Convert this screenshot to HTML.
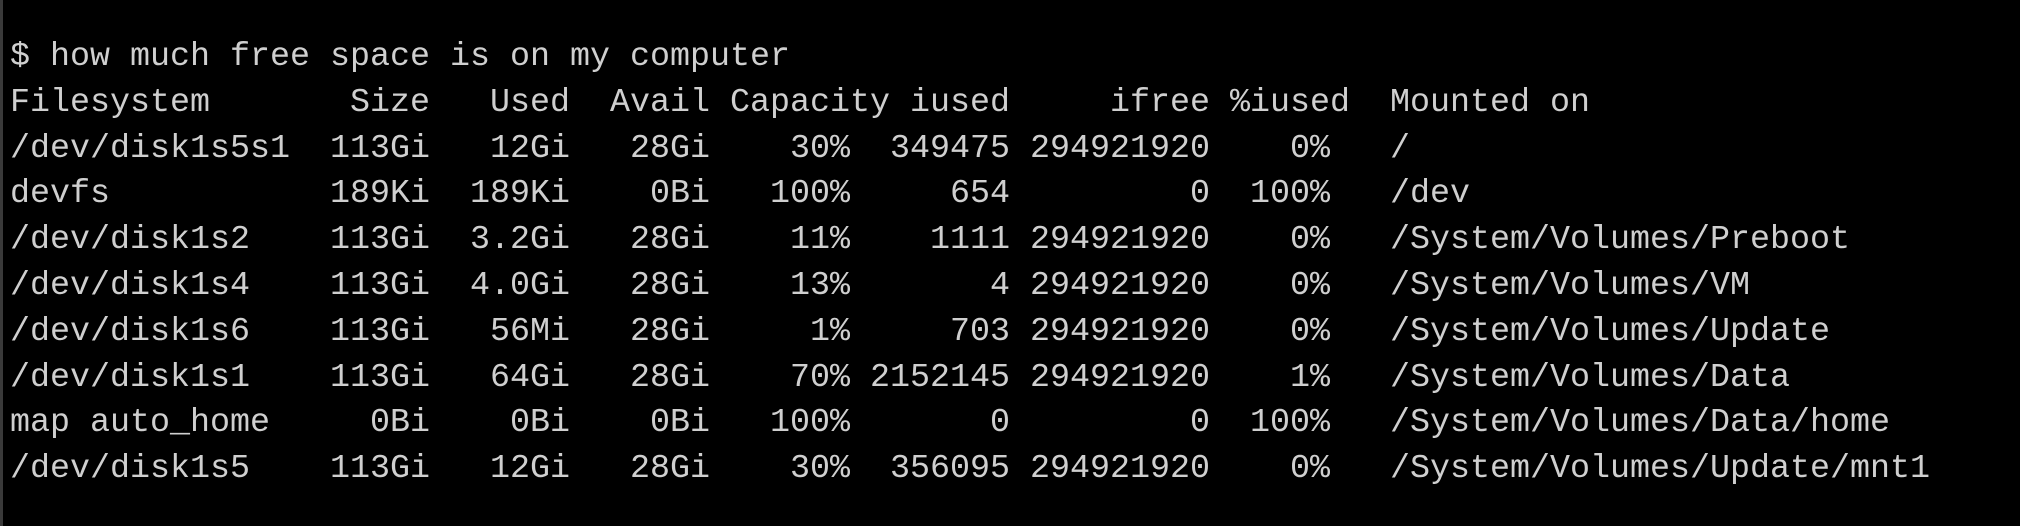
<!DOCTYPE html>
<html><head><meta charset="utf-8"><style>
html,body{margin:0;padding:0;background:#000;width:2020px;height:526px;overflow:hidden}
.b{position:absolute;left:0;top:0;width:3px;height:526px;background:#3a3a3a}
pre{position:absolute;left:10px;top:35px;margin:0;font-family:"Liberation Mono",monospace;font-size:33.33px;line-height:45.8px;color:#cfcfcf;white-space:pre}
</style></head><body><div class="b"></div>
<pre>$ how much free space is on my computer
Filesystem       Size   Used  Avail Capacity iused     ifree %iused  Mounted on
/dev/disk1s5s1  113Gi   12Gi   28Gi    30%  349475 294921920    0%   /
devfs           189Ki  189Ki    0Bi   100%     654         0  100%   /dev
/dev/disk1s2    113Gi  3.2Gi   28Gi    11%    1111 294921920    0%   /System/Volumes/Preboot
/dev/disk1s4    113Gi  4.0Gi   28Gi    13%       4 294921920    0%   /System/Volumes/VM
/dev/disk1s6    113Gi   56Mi   28Gi     1%     703 294921920    0%   /System/Volumes/Update
/dev/disk1s1    113Gi   64Gi   28Gi    70% 2152145 294921920    1%   /System/Volumes/Data
map auto_home     0Bi    0Bi    0Bi   100%       0         0  100%   /System/Volumes/Data/home
/dev/disk1s5    113Gi   12Gi   28Gi    30%  356095 294921920    0%   /System/Volumes/Update/mnt1</pre>
</body></html>
